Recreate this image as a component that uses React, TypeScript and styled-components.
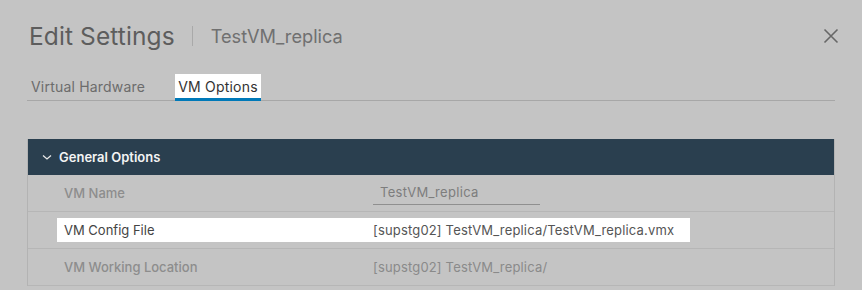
import styled, { createGlobalStyle } from 'styled-components';

const GlobalStyle = createGlobalStyle`
  html, body {
    margin: 0;
    padding: 0;
    background: #c4c4c4;
  }
  body {
    font-family: Inter, "Noto Sans", sans-serif;
  }
`;

const Dialog = styled.div`
  width: 862px;
  height: 290px;
  overflow: hidden;
  box-sizing: border-box;
  padding: 0 27px;
  background: #c4c4c4;
`;

const Header = styled.div`
  display: flex;
  align-items: center;
  height: 36px;
  padding: 18px 0 0 2px;
`;

const Title = styled.h1`
  margin: 0;
  font-size: 24.5px;
  font-weight: 400;
  color: #5d5d5d;
  letter-spacing: 0.1px;
`;

const Divider = styled.span`
  width: 1px;
  height: 20px;
  background: #a9a9a9;
  margin: 0 18px 0 17px;
`;

const SubTitle = styled.span`
  font-size: 18.2px;
  color: #707070;
  flex: 1;
`;

const CloseButton = styled.button`
  border: none;
  background: none;
  padding: 0;
  margin-right: -6px;
  width: 20px;
  height: 20px;
  display: flex;
  align-items: center;
  justify-content: center;
`;

const Tabs = styled.div`
  display: flex;
  gap: 27px;
  margin-top: 20px;
  border-bottom: 1px solid #a7a7a7;
  padding-left: 1px;
`;

const Tab = styled.div<{ $active?: boolean }>`
  height: 27px;
  box-sizing: border-box;
  padding: 3px 3px 0;
  font-size: 14px;
  line-height: 20px;
  letter-spacing: 0.2px;
  color: ${(p) => (p.$active ? '#333' : '#6c6c6c')};
  background: ${(p) => (p.$active ? '#fff' : 'transparent')};
  border-bottom: 3px solid ${(p) => (p.$active ? '#0079b8' : 'transparent')};
  margin-bottom: -1px;
`;

const Panel = styled.div`
  margin-top: 38px;
  border-left: 1px solid #b3b3b3;
  border-right: 1px solid #b3b3b3;
`;

const PanelHeader = styled.div`
  height: 36px;
  background: #2a3f4f;
  display: flex;
  align-items: center;
  padding-left: 14px;
  gap: 7px;
  color: #f4f4f4;
  font-size: 13px;
  font-weight: 600;
`;

const Row = styled.div`
  height: 36px;
  border-bottom: 1px solid #b6b6b6;
  display: flex;
  align-items: center;
  padding-left: 29px;
`;

const RowContent = styled.div<{ $highlight?: boolean }>`
  width: 633px;
  height: 24px;
  display: flex;
  align-items: center;
  background: ${(p) => (p.$highlight ? '#fff' : 'transparent')};
  font-size: 13px;
`;

const Label = styled.div<{ $highlight?: boolean }>`
  width: 316px;
  padding-left: 7px;
  box-sizing: border-box;
  color: ${(p) => (p.$highlight ? '#444' : '#8d8d8d')};
  font-weight: ${(p) => (p.$highlight ? 400 : 500)};
`;

const Value = styled.div<{ $highlight?: boolean }>`
  color: ${(p) => (p.$highlight ? '#555' : '#8a8a8a')};
  letter-spacing: 0.17px;
`;

const Input = styled.div`
  width: 160px;
  padding: 0 0 4px 7px;
  margin-top: 2px;
  border-bottom: 1px solid #8f8f8f;
  color: #7d7d7d;
  letter-spacing: 0.3px;
`;

const Chevron = () => (
  <svg width="10" height="10" viewBox="0 0 10 10">
    <path d="M1 3.5 L5 7 L9 3.5" fill="none" stroke="#e8e8e8" strokeWidth="1.3" />
  </svg>
);

const CloseIcon = () => (
  <svg width="16" height="16" viewBox="0 0 16 16">
    <path d="M1.5 1.5 L14.5 14.5 M14.5 1.5 L1.5 14.5" stroke="#676767" strokeWidth="1.6" />
  </svg>
);

const rows = [
  { label: 'VM Config File', value: '[supstg02] TestVM_replica/TestVM_replica.vmx', highlight: true },
  { label: 'VM Working Location', value: '[supstg02] TestVM_replica/' },
];

const App = () => {
  return (
    <Dialog>
      <GlobalStyle />
      <Header>
        <Title>Edit Settings</Title>
        <Divider />
        <SubTitle>TestVM_replica</SubTitle>
        <CloseButton>
          <CloseIcon />
        </CloseButton>
      </Header>
      <Tabs>
        <Tab>Virtual Hardware</Tab>
        <Tab $active>VM Options</Tab>
      </Tabs>
      <Panel>
        <PanelHeader>
          <Chevron />
          General Options
        </PanelHeader>
        <Row>
          <RowContent>
            <Label>VM Name</Label>
            <Input>TestVM_replica</Input>
          </RowContent>
        </Row>
        {rows.map((r) => (
          <Row key={r.label}>
            <RowContent $highlight={r.highlight}>
              <Label $highlight={r.highlight}>{r.label}</Label>
              <Value $highlight={r.highlight}>{r.value}</Value>
            </RowContent>
          </Row>
        ))}
      </Panel>
    </Dialog>
  );
};

export default App;
